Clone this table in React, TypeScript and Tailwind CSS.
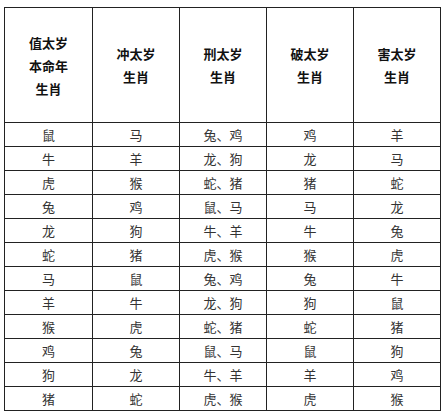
const headers: string[][] = [
  ["值太岁", "本命年", "生肖"],
  ["冲太岁", "生肖"],
  ["刑太岁", "生肖"],
  ["破太岁", "生肖"],
  ["害太岁", "生肖"],
];

const rows: string[][] = [
  ["鼠", "马", "兔、鸡", "鸡", "羊"],
  ["牛", "羊", "龙、狗", "龙", "马"],
  ["虎", "猴", "蛇、猪", "猪", "蛇"],
  ["兔", "鸡", "鼠、马", "马", "龙"],
  ["龙", "狗", "牛、羊", "牛", "兔"],
  ["蛇", "猪", "虎、猴", "猴", "虎"],
  ["马", "鼠", "兔、鸡", "兔", "牛"],
  ["羊", "牛", "龙、狗", "狗", "鼠"],
  ["猴", "虎", "蛇、猪", "蛇", "猪"],
  ["鸡", "兔", "鼠、马", "鼠", "狗"],
  ["狗", "龙", "牛、羊", "羊", "鸡"],
  ["猪", "蛇", "虎、猴", "虎", "猴"],
];

const widths = ["w-[88px]", "w-[87px]", "w-[87px]", "w-[87px]", "w-[87px]"];

export default function App() {
  return (
    <div className="w-[446px] h-[417px] bg-white pt-[7px] pl-[4px] font-['Noto_Sans_CJK_SC',sans-serif]">
      <table className="border-collapse table-fixed border border-[#222]">
        <thead>
          <tr className="h-[115px]">
            {headers.map((lines, i) => (
              <th
                key={i}
                className={`${widths[i]} border border-[#222] p-0 text-[13px] leading-[23px] font-bold text-[#111] text-center align-middle`}
              >
                {lines.map((l) => (
                  <div key={l}>{l}</div>
                ))}
              </th>
            ))}
          </tr>
        </thead>
        <tbody>
          {rows.map((row, r) => (
            <tr key={r} className="h-[24px]">
              {row.map((cell, c) => (
                <td
                  key={c}
                  className="border border-[#222] p-0 text-[13px] leading-[23px] text-[#333] text-center align-middle"
                >
                  {cell}
                </td>
              ))}
            </tr>
          ))}
        </tbody>
      </table>
    </div>
  );
}
